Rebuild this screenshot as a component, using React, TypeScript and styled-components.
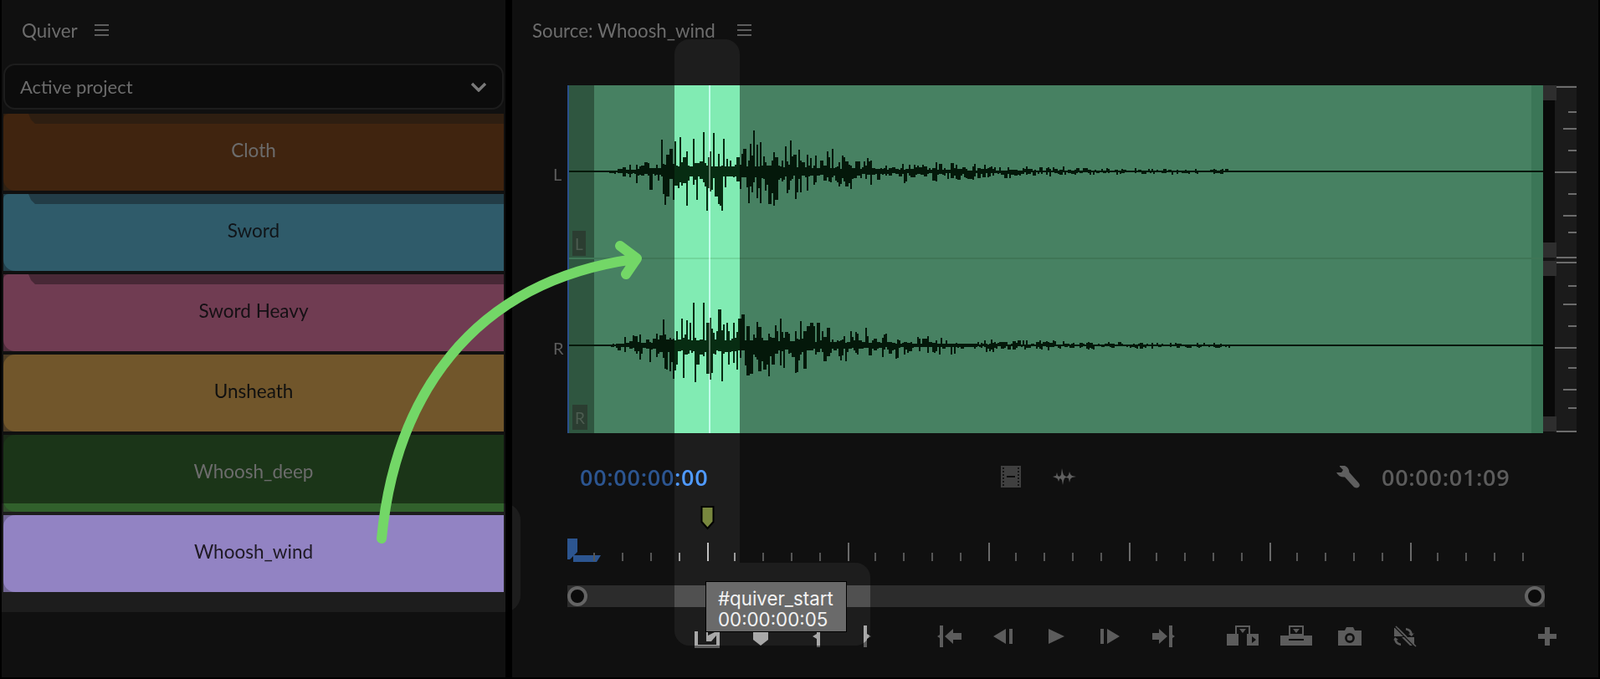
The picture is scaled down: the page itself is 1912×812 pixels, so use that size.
import React from "react";
import styled, { createGlobalStyle } from "styled-components";

const UI_FONT = `"Lato", "Open Sans", sans-serif`;
const ICON = "#5c5c5c";
const BG = "#101010";

type Bin = {
    name: string;
    color: string;
    corner: string;
    band?: string;
    text: string;
};

const BINS: Bin[] = [
    { name: "Cloth", color: "#40240f", corner: "#2f2114", band: "#2e1e11", text: "#6c6c6c" },
    { name: "Sword", color: "#2f5b6a", corner: "#223f4a", band: "#223c46", text: "#101418" },
    { name: "Sword Heavy", color: "#703c52", corner: "#4c2c3a", band: "#482836", text: "#141014" },
    { name: "Unsheath", color: "#71562b", corner: "#4c3c25", text: "#101010" },
    { name: "Whoosh_deep", color: "#1b3518", corner: "#1b2a18", text: "#6c6c6c" },
    { name: "Whoosh_wind", color: "#50486b", corner: "#3e3852", text: "#110e14" },
];

// hand read spikes from the clip, the rest of the wave is noise under an envelope
const LEFT_SPIKES = {
    up: { 900: 49, 841: 47, 852: 46, 812: 41, 829: 39, 944: 37, 801: 27, 995: 27 } as Record<number, number>,
    down: { 844: 47, 862: 47, 924: 41, 950: 33, 820: 41, 894: 38 } as Record<number, number>,
};
const RIGHT_SPIKES = {
    up: { 829: 51, 841: 51, 858: 43, 898: 43, 956: 29, 976: 27, 1034: 21 } as Record<number, number>,
    down: { 838: 49, 830: 44, 862: 43, 816: 39, 892: 36, 950: 33, 912: 29 } as Record<number, number>,
};

const seeded = (seed: number) => () => {
    seed = (seed * 1664525 + 1013904223) % 4294967296;
    return seed / 4294967296;
};

const envelope = (x: number) => {
    if (x < 726 || x > 1470) return 0;
    if (x < 790) return 1.5 + ((x - 726) / 64) * 17;
    if (x <= 905) return 28;
    return 27 * Math.exp(-(x - 905) / 150) + 1.6;
};

const wavePath = (centerY: number, seed: number, spikes: typeof LEFT_SPIKES) => {
    const rnd = seeded(seed);
    let d = "";
    let x = 726;
    while (x < 1470) {
        const a = rnd();
        const b = rnd();
        const width = rnd() < 0.2 ? 4 : 2;
        const env = envelope(x);
        const up = spikes.up[x] ?? spikes.up[x + 1] ?? Math.round(env * (0.22 + Math.pow(a, 2.5) * 1.2));
        const down = spikes.down[x] ?? spikes.down[x + 1] ?? Math.round(env * (0.22 + Math.pow(b, 2.5) * 1.3));
        d += `M${x - 678} ${centerY - up}h${width}v${up + down}h-${width}z`;
        x += width;
    }
    return d;
};

const LEFT_WAVE = wavePath(103, 11, LEFT_SPIKES);
const RIGHT_WAVE = wavePath(311, 47, RIGHT_SPIKES);

const METER_TICKS = [
    { y: 1, from: 16 }, { y: 31, from: 30 }, { y: 51, from: 24 }, { y: 77, from: 30 }, { y: 103, from: 14 },
    { y: 129, from: 30 }, { y: 155, from: 24 }, { y: 175, from: 30 }, { y: 205, from: 16 },
    { y: 211, from: 16 }, { y: 239, from: 30 }, { y: 261, from: 24 }, { y: 287, from: 30 }, { y: 313, from: 14 },
    { y: 337, from: 30 }, { y: 363, from: 24 }, { y: 385, from: 30 }, { y: 413, from: 16 },
];

const RULER_TICKS: { x: number; long: boolean }[] = [];
for (let start = 677; start < 1700; start += 168) {
    if (start > 677) RULER_TICKS.push({ x: start, long: true });
    [32, 66, 100, 134].forEach((offset) => {
        if (start + offset < 1830) RULER_TICKS.push({ x: start + offset, long: false });
    });
}

const MenuIcon = () => (
    <MenuGlyph>
        <span />
        <span />
        <span />
    </MenuGlyph>
);

const Chevron = () => (
    <svg width="20" height="12" viewBox="0 0 20 12" fill="none">
        <path d="M2 2l8 8 8-8" stroke="#7a7a7a" strokeWidth="3.4" />
    </svg>
);

const FilmIcon = () => (
    <svg width="24" height="26" viewBox="0 0 24 26">
        <rect width="24" height="26" fill="#3f3f3f" />
        {[2, 6, 10, 14, 18, 22].map((y) => (
            <g key={y} fill="#151515">
                <rect x="2" y={y} width="2" height="2" />
                <rect x="20" y={y} width="2" height="2" />
            </g>
        ))}
        <rect x="7" y="12" width="10" height="2" fill="#0c0c0c" />
    </svg>
);

const AudioIcon = () => (
    <svg width="28" height="20" viewBox="0 0 28 20">
        <path
            d="M0 10l4-1 1-4 1 4 2 1 2-2 1-8 1 5 1 3 3 2h1l2-2 1-4 1 3 2 2 5 1-5 1-2 2-1 4-1-5-3-1-2 1-1 3-1 5-1-6-2-2-1 1-1 3-1-3-1-1z"
            fill="#5f5f5f"
        />
    </svg>
);

const WrenchIcon = () => (
    <svg width="29" height="27" viewBox="0 0 29 27">
        <path
            d="M4 0h6q5 2 5.5 8L27 21q2 3-1 5-2 1-5-.5L10 13.5Q3 14 0 8h6l2-3-4-4z"
            fill="#5f5f5f"
        />
    </svg>
);

const GoToInIcon = () => (
    <IconSvg width="40">
        <path d="M9 1h4v26H9V16l-3-2 3-2zM15 14l10-9v5h10v8H25v5z" />
    </IconSvg>
);

const StepBackIcon = () => (
    <IconSvg width="40">
        <path d="M9 14l15-9v18zM28 5h4v18h-4z" />
    </IconSvg>
);

const PlayIcon = () => (
    <IconSvg width="40">
        <path d="M11 5l19 9-19 9z" />
    </IconSvg>
);

const StepForwardIcon = () => (
    <IconSvg width="40">
        <path d="M9 5h4v18H9zM17 5l15 9-15 9z" />
    </IconSvg>
);

const GoToOutIcon = () => (
    <IconSvg width="40">
        <path d="M27 1h4v11l3 2-3 2v11h-4zM25 14l-10 9v-5H7v-8h8V5z" />
    </IconSvg>
);

const MarkInIcon = () => (
    <IconSvg width="40">
        <path d="M5 8h4v16h22V8h4v20H5z" />
        <path d="M19 1h2v12l10-5v5l-6 7H19z" />
    </IconSvg>
);

const AddMarkerIcon = () => (
    <IconSvg width="40">
        <path d="M11 1h18v17l-9 7-9-7z" />
    </IconSvg>
);

const BraceInIcon = () => (
    <IconSvg width="40">
        <path d="M23 1h4v26h-4V17l-5-3 5-3z" />
    </IconSvg>
);

const BraceOutIcon = () => (
    <IconSvg width="40">
        <path d="M15 1h4v10l5 3-5 3v10h-4z" />
    </IconSvg>
);

const InsertIcon = () => (
    <IconSvg width="48">
        <path d="M5 11h14v14H5zM29 11h14v14H29z" />
        <path d="M15 1h18v12h-4v-2H19v2h-4zM17 3v8h14V3z" fillRule="evenodd" />
        <path d="M20 5h8l-4 5z" />
        <path d="M35 14l5 4-5 4z" fill={BG} />
    </IconSvg>
);

const OverwriteIcon = () => (
    <IconSvg width="48">
        <path d="M15 1h18v12H15zM17 3v8h14V3z" fillRule="evenodd" />
        <path d="M5 13h38v12H5z" />
        <path d="M20 5h8l-4 5z" />
        <path d="M15 17h18v2H15z" fill={BG} />
    </IconSvg>
);

const CameraIcon = () => (
    <IconSvg width="48">
        <path d="M10 7h8l2-4h8l2 4h8v18H10z" />
        <circle cx="24" cy="16" r="4.6" fill="none" stroke={BG} strokeWidth="2.6" />
    </IconSvg>
);

const SyncLockIcon = () => (
    <IconSvg width="48">
        <path d="M13 4h5l10 10H13zM22 15h15v10h-5z" />
        <path d="M27 4a9 9 0 0 1 8 7l2-1-3 4-4-3 2-.5a6 6 0 0 0-5-4zM21 25a9 9 0 0 1-8-7l-1 1 2-4 4 3-2 .5a6 6 0 0 0 5 4z" />
        <path d="M13 2l24 24" stroke={BG} strokeWidth="1.5" />
        <path d="M15 2l24 24" stroke={ICON} strokeWidth="1.5" />
    </IconSvg>
);

const PlusIcon = () => (
    <IconSvg width="40">
        <path d="M17 3h6v8h8v6h-8v8h-6v-8H9v-6h8z" />
    </IconSvg>
);

const App = () => {
    return (
        <>
            <GlobalStyle />
            <Page>
                <QuiverPanel>
                    <PanelHeader $gap={20}>
                        <PanelTitle>Quiver</PanelTitle>
                        <MenuIcon />
                    </PanelHeader>
                    <ProjectSelect>
                        <span>Active project</span>
                        <Chevron />
                    </ProjectSelect>
                    <BinList>
                        {BINS.map((bin) => (
                            <BinCard key={bin.name} $corner={bin.corner}>
                                {bin.band && <BinBand $band={bin.band} $color={bin.color} />}
                                <BinBody $color={bin.color} $text={bin.text} $tabbed={!!bin.band}>
                                    {bin.name}
                                </BinBody>
                            </BinCard>
                        ))}
                    </BinList>
                </QuiverPanel>
                <SourcePanel>
                    <PanelHeader $gap={26}>
                        <PanelTitle>Source: Whoosh_wind</PanelTitle>
                        <MenuIcon />
                    </PanelHeader>
                    <Monitor>
                        <ChannelLabels>
                            <span>L</span>
                            <span>R</span>
                        </ChannelLabels>
                        <WaveArea>
                            <WaveEdgeLeft />
                            <WaveMiddle />
                            <WaveEdgeRight />
                            <ChannelDivider />
                            <ChannelTag $top={174} $width={16}>L</ChannelTag>
                            <ChannelTag $top={382} $width={18}>R</ChannelTag>
                            <WaveDrawing viewBox="0 0 1166 416" width="1166" height="416">
                                <rect x="2" y="102" width="1164" height="2" fill="#04180a" />
                                <rect x="2" y="310" width="1164" height="2" fill="#04180a" />
                                <path d={LEFT_WAVE} fill="#04180a" />
                                <path d={RIGHT_WAVE} fill="#04180a" />
                            </WaveDrawing>
                            <Playhead />
                        </WaveArea>
                        <Meter>
                            <MeterTrack>
                                <MeterChannel $height={206}>
                                    <MeterThumb />
                                    <MeterThumb />
                                </MeterChannel>
                                <MeterChannel $height={204}>
                                    <MeterThumb />
                                    <MeterThumb />
                                </MeterChannel>
                            </MeterTrack>
                            <MeterScale viewBox="0 0 26 415" width="26" height="415">
                                {METER_TICKS.map((tick) => (
                                    <rect
                                        key={tick.y}
                                        x={tick.from - 14}
                                        y={tick.y}
                                        width={40 - tick.from}
                                        height="2"
                                        fill="#6c6c6c"
                                    />
                                ))}
                            </MeterScale>
                        </Meter>
                    </Monitor>
                    <TimeRow>
                        <CurrentTime>00:00:00:00</CurrentTime>
                        <FilmSlot>
                            <FilmIcon />
                        </FilmSlot>
                        <AudioSlot>
                            <AudioIcon />
                        </AudioSlot>
                        <WrenchSlot>
                            <WrenchIcon />
                        </WrenchSlot>
                        <Duration>00:00:01:09</Duration>
                    </TimeRow>
                    <Ruler viewBox="0 0 1168 68" width="1168" height="68">
                        <path d="M0 39h12v16l-9 9H0zM7 59h33l-5 8H7z" fill="#2c5590" />
                        {RULER_TICKS.map((tick) => (
                            <rect
                                key={tick.x}
                                x={tick.x - 678}
                                y={tick.long ? 44 : 56}
                                width="2"
                                height={tick.long ? 22 : 10}
                                fill={tick.long ? "#6a6a6a" : "#565656"}
                            />
                        ))}
                        <path d="M160.5 1h14v18l-7 8-7-8z" fill="#424a22" stroke="#000" strokeWidth="2" />
                    </Ruler>
                    <ZoomBar>
                        <ZoomHandle />
                        <ZoomHandle />
                    </ZoomBar>
                    <Transport>
                        <IconGroup>
                            <MarkInIcon />
                            <AddMarkerIcon />
                            <BraceInIcon />
                            <BraceOutIcon />
                        </IconGroup>
                        <IconGroup>
                            <GoToInIcon />
                            <StepBackIcon />
                            <PlayIcon />
                            <StepForwardIcon />
                            <GoToOutIcon />
                        </IconGroup>
                        <IconGroup>
                            <InsertIcon />
                            <OverwriteIcon />
                            <CameraIcon />
                            <SyncLockIcon />
                        </IconGroup>
                        <PlusSlot>
                            <PlusIcon />
                        </PlusSlot>
                    </Transport>
                </SourcePanel>
                <SpotBins />
                <SpotColumn />
                <SpotRow />
                <MarkerTooltip>
                    #quiver_start
                    <br />
                    00:00:00:05
                </MarkerTooltip>
                <DragArrow viewBox="0 0 1912 812" width="1912" height="812" fill="none">
                    <path
                        d="M456 644C472 478 560 338 757 310M741 294l20 15-13 19"
                        stroke="#73d767"
                        strokeWidth="12"
                        strokeLinecap="round"
                        strokeLinejoin="round"
                    />
                </DragArrow>
            </Page>
        </>
    );
};

const GlobalStyle = createGlobalStyle`
    html, body {
        margin: 0;
        padding: 0;
        background: #000;
    }
    * {
        box-sizing: border-box;
    }
`;

const Page = styled.div`
    position: relative;
    isolation: isolate;
    display: flex;
    gap: 8px;
    width: 1912px;
    height: 812px;
    padding: 0 2px 2px;
    overflow: hidden;
    background: #000;
    font-family: ${UI_FONT};
`;

const QuiverPanel = styled.section`
    width: 602px;
    background: ${BG};
`;

const SourcePanel = styled.section`
    flex: 1;
    display: flex;
    flex-direction: column;
    background: ${BG};
`;

const PanelHeader = styled.header<{ $gap: number }>`
    display: flex;
    align-items: center;
    gap: ${(p) => p.$gap}px;
    height: 76px;
    padding: 0 0 4px 24px;
    color: #6c6c6c;
    flex-shrink: 0;
`;

const PanelTitle = styled.h2`
    margin: 0;
    font-size: 22.3px;
    font-weight: 400;
`;

const MenuGlyph = styled.div`
    display: flex;
    flex-direction: column;
    justify-content: space-between;
    width: 17px;
    height: 14px;
    span {
        height: 2px;
        background: #5e5e5e;
    }
`;

const ProjectSelect = styled.div`
    display: flex;
    align-items: center;
    justify-content: space-between;
    width: 598px;
    height: 55px;
    margin-left: 2px;
    padding: 0 18px 0 18px;
    border: 2px solid #1d1d1d;
    border-radius: 14px;
    background: #0c0c0c;
    color: #6c6c6c;
    font-size: 22px;
`;

const BinList = styled.div`
    display: flex;
    flex-direction: column;
    gap: 4px;
    width: 598px;
    margin: 5px 0 0 2px;
`;

const BinCard = styled.div<{ $corner: string }>`
    display: flex;
    flex-direction: column;
    height: 92px;
    background: ${(p) => p.$corner};
`;

const BinBand = styled.div<{ $band: string; $color: string }>`
    position: relative;
    flex-shrink: 0;
    height: 12px;
    background: ${(p) => p.$band};
    &::before {
        content: "";
        position: absolute;
        inset: 0 auto 0 0;
        width: 38px;
        background: ${(p) => p.$color};
        border-top-left-radius: 6px;
        clip-path: polygon(0 0, 30px 0, 33px 7px, 38px 12px, 0 12px);
    }
`;

const BinBody = styled.div<{ $color: string; $text: string; $tabbed: boolean }>`
    flex: 1;
    display: flex;
    align-items: center;
    justify-content: center;
    padding-bottom: ${(p) => (p.$tabbed ? 17 : 5)}px;
    border-radius: ${(p) => (p.$tabbed ? "0 0 0 14px" : "14px 0 0 14px")};
    background: ${(p) => p.$color};
    color: ${(p) => p.$text};
    font-size: 22.5px;
`;

const Monitor = styled.div`
    display: grid;
    grid-template-columns: 18px 1166px 40px;
    height: 416px;
    margin: 26px 0 0 48px;
`;

const ChannelLabels = styled.div`
    display: flex;
    flex-direction: column;
    color: #5c5c5c;
    font-size: 20px;
    span {
        flex: 1;
        display: flex;
        align-items: center;
        padding: 4px 0 0 1px;
    }
`;

const WaveArea = styled.div`
    position: relative;
    display: flex;
    border-left: 2px solid #2a4f8c;
    background: #478162;
`;

const WaveEdgeLeft = styled.div`
    width: 30px;
    background: #2f5640;
`;

const WaveMiddle = styled.div`
    flex: 1;
`;

const WaveEdgeRight = styled.div`
    width: 14px;
    background: #3b7657;
`;

const ChannelDivider = styled.div`
    position: absolute;
    left: 0;
    right: 0;
    top: 206px;
    height: 2px;
    background: #3f7656;
`;

const ChannelTag = styled.div<{ $top: number; $width: number }>`
    position: absolute;
    left: 4px;
    top: ${(p) => p.$top}px;
    display: flex;
    align-items: center;
    justify-content: center;
    width: ${(p) => p.$width}px;
    height: 30px;
    background: #2b3d31;
    color: #4c5c50;
    font-size: 19px;
`;

const WaveDrawing = styled.svg`
    position: absolute;
    left: -2px;
    top: 0;
`;

const Playhead = styled.div`
    position: absolute;
    left: 167px;
    top: 0;
    bottom: 0;
    width: 2px;
    background: rgba(255, 255, 255, 0.2);
`;

const Meter = styled.div`
    display: flex;
`;

const MeterTrack = styled.div`
    display: flex;
    flex-direction: column;
    gap: 4px;
    width: 14px;
    height: 414px;
    background: #141414;
    z-index: 1;
`;

const MeterChannel = styled.div<{ $height: number }>`
    display: flex;
    flex-direction: column;
    justify-content: space-between;
    height: ${(p) => p.$height}px;
    background: #090909;
`;

const MeterThumb = styled.div`
    width: 16px;
    height: 18px;
    background: #2e2e2e;
`;

const MeterScale = styled.svg`
    background: #1b1b1b;
`;

const TimeRow = styled.div`
    display: flex;
    align-items: center;
    height: 87px;
    padding: 17px 0 0 81px;
    flex-shrink: 0;
`;

const CurrentTime = styled.div`
    width: 152px;
    color: #2c5590;
    font-size: 27px;
    font-weight: 600;
    letter-spacing: 0.7px;
    font-family: "Open Sans", sans-serif;
    white-space: nowrap;
`;

const FilmSlot = styled.div`
    display: flex;
    margin-left: 351px;
`;

const AudioSlot = styled.div`
    display: flex;
    margin-left: 38px;
`;

const WrenchSlot = styled.div`
    display: flex;
    margin-left: 311px;
`;

const Duration = styled.div`
    width: 154px;
    margin-left: 25px;
    color: #5c5c5c;
    font-size: 27px;
    font-weight: 600;
    letter-spacing: 0.7px;
    font-family: "Open Sans", sans-serif;
    white-space: nowrap;
`;

const Ruler = styled.svg`
    display: block;
    flex-shrink: 0;
    margin-left: 66px;
`;

const ZoomBar = styled.div`
    display: flex;
    align-items: center;
    justify-content: space-between;
    width: 1168px;
    height: 26px;
    margin: 27px 0 0 66px;
    background: #2c2c2c;
    flex-shrink: 0;
`;

const ZoomHandle = styled.div`
    width: 24px;
    height: 24px;
    border: 4px solid #646464;
    border-radius: 50%;
    background: #0b0b0b;
`;

const Transport = styled.div`
    display: flex;
    height: 28px;
    margin-top: 21px;
    padding-left: 201px;
    flex-shrink: 0;
`;

const IconGroup = styled.div`
    display: flex;
    & + & {
        margin-left: 33px;
    }
    &:nth-child(3) {
        margin-left: 31px;
    }
`;

const IconSvgBase = styled.svg`
    display: block;
    height: 28px;
    fill: ${ICON};
    margin: 0 12px;
    &[data-wide] {
        margin: 0 8px;
    }
`;

const IconSvg = ({ width, children }: { width: string; children: React.ReactNode }) => (
    <IconSvgBase
        viewBox={`0 0 ${width} 28`}
        width={width}
        height="28"
        data-wide={width === "48" ? true : undefined}
    >
        {children}
    </IconSvgBase>
);

const PlusSlot = styled.div`
    margin-left: auto;
    padding-right: 29px;
`;

const Spot = styled.div`
    position: absolute;
    background: #737373;
    mix-blend-mode: color-dodge;
    pointer-events: none;
`;

const SpotBins = styled(Spot)`
    left: 0;
    top: 602px;
    width: 622px;
    height: 130px;
    border-radius: 0 20px 20px 0;
`;

const SpotColumn = styled(Spot)`
    left: 806px;
    top: 47px;
    width: 78px;
    height: 626px;
    border-radius: 18px 18px 0 0;
`;

const SpotRow = styled(Spot)`
    left: 806px;
    top: 673px;
    width: 234px;
    height: 99px;
    border-radius: 0 18px 18px 18px;
`;

const MarkerTooltip = styled.div`
    position: absolute;
    left: 843px;
    top: 695px;
    width: 169px;
    height: 61px;
    padding: 7px 0 0 14px;
    border: 1px solid #000;
    background: #6a6a6a;
    color: #f2f2f2;
    font-family: "Inter", sans-serif;
    font-size: 22.3px;
    line-height: 25px;
    white-space: nowrap;
`;

const DragArrow = styled.svg`
    position: absolute;
    left: 0;
    top: 0;
    pointer-events: none;
`;

export default App;
